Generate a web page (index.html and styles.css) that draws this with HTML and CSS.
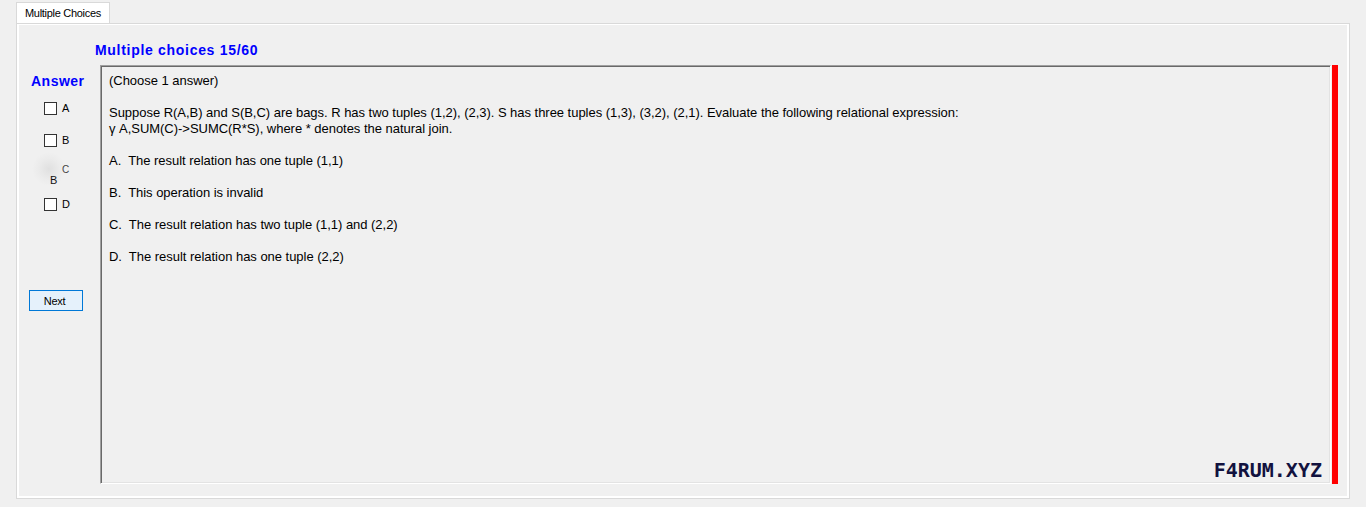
FILE: index.html
```html
<!DOCTYPE html>
<html>
<head>
<meta charset="utf-8">
<title>Multiple Choices</title>
<link rel="stylesheet" href="styles.css">
</head>
<body>
<div class="tabstrip">
  <div class="tab">Multiple Choices</div>
</div>
<div class="panel">
  <div class="title">Multiple choices 15/60</div>
  <div class="main">
    <div class="answer-col">
      <div class="answer-title">Answer</div>
      <div class="opt"><span class="box"></span><span class="lbl">A</span></div>
      <div class="opt"><span class="box"></span><span class="lbl">B</span></div>
      <div class="opt glitch">
        <span class="blob"></span>
        <span class="ghost-c">C</span>
        <span class="ghost-b">B</span>
      </div>
      <div class="opt"><span class="box"></span><span class="lbl">D</span></div>
      <button class="next">Next</button>
    </div>
    <div class="content">
      <p>(Choose 1 answer)</p>
      <p>Suppose R(A,B) and S(B,C) are bags. R has two tuples (1,2), (2,3). S has three tuples (1,3), (3,2), (2,1). Evaluate the following relational expression:<br>γ A,SUM(C)-&gt;SUMC(R*S), where * denotes the natural join.</p>
      <p class="choice">A.  The result relation has one tuple (1,1)</p>
      <p class="choice">B.  This operation is invalid</p>
      <p class="choice">C.  The result relation has two tuple (1,1) and (2,2)</p>
      <p class="choice">D.  The result relation has one tuple (2,2)</p>
      <div class="watermark">F4RUM.XYZ</div>
    </div>
    <div class="redbar"></div>
  </div>
</div>
</body>
</html>
```
FILE: styles.css
```css
html, body {
  margin: 0;
  padding: 0;
  background: #f0f0f0;
  font-family: "Liberation Sans", Arial, sans-serif;
  color: #000;
}

.tabstrip {
  height: 23px;
  padding-left: 16px;
  padding-top: 2px;
  box-sizing: border-box;
  display: flex;
  align-items: flex-end;
}

.tab {
  height: 21px;
  box-sizing: border-box;
  padding: 0 8px 0 8px;
  background: #fff;
  border: 1px solid #d9d9d9;
  border-bottom: none;
  font-size: 11px;
  letter-spacing: -0.3px;
  line-height: 20px;
  width: 94px;
}

.panel {
  margin-left: 16px;
  width: 1334px;
  height: 476px;
  box-sizing: border-box;
  border: 1px solid #d9d9d9;
  box-shadow: inset 2px 0 0 #fff, inset -2px 0 0 #fff, inset 0 -2px 0 #fff, inset 0 1px 0 #fff;
  padding-top: 18px;
  display: flex;
  flex-direction: column;
}

.title {
  margin-left: 78px;
  font-weight: bold;
  font-size: 14px;
  line-height: 16px;
  letter-spacing: 0.7px;
  color: #0000ff;
  height: 16px;
}

.main {
  margin-top: 7px;
  display: flex;
  height: 419px;
}

.answer-col {
  width: 83px;
  flex: none;
  display: flex;
  flex-direction: column;
  align-items: flex-start;
}

.answer-title {
  margin-top: 8px;
  margin-left: 14px;
  font-weight: bold;
  font-size: 14px;
  line-height: 16px;
  letter-spacing: 0.5px;
  color: #0000ff;
  margin-bottom: 5px;
}

.opt {
  height: 32px;
  margin-left: 27px;
  display: flex;
  align-items: flex-start;
  gap: 5px;
}

.box {
  margin-top: 8px;
  width: 13px;
  height: 13px;
  box-sizing: border-box;
  border: 1px solid #333;
  background: #fff;
}

.lbl {
  margin-top: 7px;
  font-size: 11px;
  line-height: 14px;
}

.glitch {
  position: relative;
  width: 40px;
}

.blob {
  position: absolute;
  left: -12px;
  top: -6px;
  width: 34px;
  height: 34px;
  border-radius: 50%;
  background: radial-gradient(circle, rgba(205,205,205,0.45) 0%, rgba(222,222,222,0.25) 45%, rgba(240,240,240,0) 70%);
}

.ghost-c {
  position: absolute;
  left: 18px;
  top: 7px;
  font-size: 10px;
  line-height: 10px;
  color: #444;
}

.ghost-b {
  position: absolute;
  left: 6px;
  top: 16px;
  font-size: 11px;
  line-height: 12px;
  color: #111;
}

.next {
  margin-top: 68px;
  margin-left: 12px;
  width: 54px;
  height: 21px;
  padding: 0 3px 0 0;
  border: 1px solid #0078d7;
  background: #e5f1fb;
  font-family: "Liberation Sans", Arial, sans-serif;
  font-size: 11px;
  letter-spacing: -0.3px;
  color: #000;
}

.content {
  position: relative;
  flex: none;
  width: 1231px;
  height: 419px;
  box-sizing: border-box;
  border: 1px solid;
  border-color: #a0a0a0 #fff #fff #a0a0a0;
  box-shadow: inset 1px 1px 0 #696969, inset -1px -1px 0 #e3e3e3;
  padding: 7px 8px;
  font-size: 13px;
  line-height: 16px;
  letter-spacing: -0.03px;
}

.content p {
  margin: 0 0 16px 0;
}

.choice {
  white-space: pre;
}

.watermark {
  position: absolute;
  right: 8px;
  bottom: 1px;
  font-family: "DejaVu Sans Mono", monospace;
  font-weight: bold;
  font-size: 20px;
  line-height: 24px;
  color: #12123f;
  letter-spacing: 0;
}

.redbar {
  margin-left: 1px;
  width: 6px;
  height: 419px;
  background: #ff0000;
  flex: none;
}
```
